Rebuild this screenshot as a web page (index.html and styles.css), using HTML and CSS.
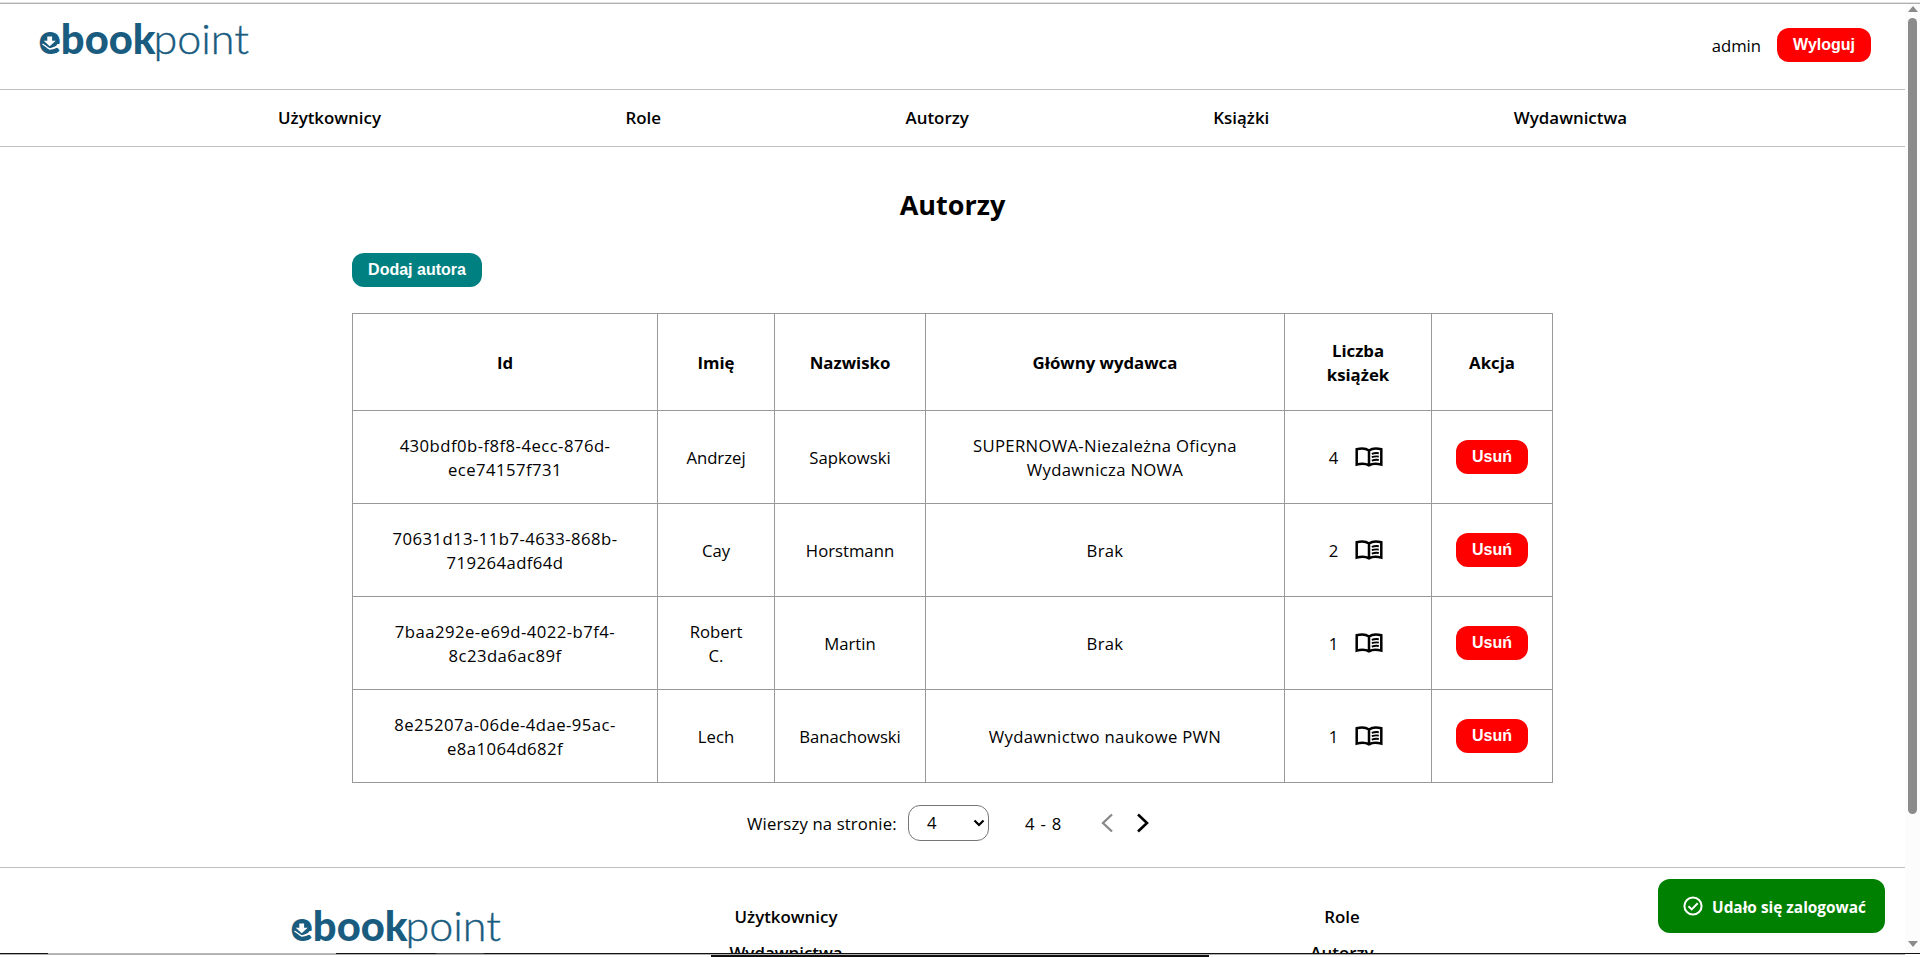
FILE: index.html
```html
<!DOCTYPE html>
<html lang="pl">
<head>
<meta charset="utf-8">
<title>Autorzy</title>
<link rel="stylesheet" href="styles.css">
</head>
<body>
<svg class="defs" width="0" height="0" aria-hidden="true">
  <defs>
    <symbol id="logo" viewBox="0 0 214 44">
      <g class="logo-text">
        <text x="0.500" y="32.500" class="logo-bold" textLength="117" lengthAdjust="spacingAndGlyphs">ebook</text>
        <text x="115.500" y="32.500" class="logo-light" textLength="95.500" lengthAdjust="spacingAndGlyphs">point</text>
        <ellipse cx="12" cy="20.500" rx="8" ry="7"/>
      </g>
      <path class="logo-cut" d="M9.300 15.500h4.800v4.200h3.600L11.700 25.200 5.700 19.700h3.600z"/>
      <path class="logo-swoosh" d="M4.500 23l7.200 5 9.500-3.500"/>
    </symbol>
    <symbol id="book" viewBox="0 0 28 20">
      <path d="M14 3.500C10.500 1 6 1 1.700 2.300V17.600C6 16.300 10.500 16.300 14 18.300C17.500 16.300 22 16.300 26.300 17.600V2.300C22 1 17.500 1 14 3.500V18" fill="none" stroke="#000" stroke-width="2.500"/>
      <path d="M16.800 6.800q3.500-1.200 7-.6M16.800 10.200q3.500-1.200 7-.6M16.800 13.600q3.500-1.200 7-.6" fill="none" stroke="#000" stroke-width="1.900"/>
    </symbol>
  </defs>
</svg>
<div class="edge-top"></div>
<div class="viewport">
  <div class="page">
    <header class="header">
      <svg class="logo"><use href="#logo"/></svg>
      <div class="account"><span>admin</span><button class="btn danger">Wyloguj</button></div>
    </header>
    <nav class="nav">
      <a>Użytkownicy</a><a>Role</a><a>Autorzy</a><a>Książki</a><a>Wydawnictwa</a>
    </nav>
    <main class="main">
      <h1>Autorzy</h1>
      <button class="btn add">Dodaj autora</button>
      <table class="authors">
        <colgroup><col class="c-id"><col class="c-first"><col class="c-last"><col class="c-pub"><col class="c-count"><col class="c-action"></colgroup>
        <thead><tr><th>Id</th><th>Imię</th><th>Nazwisko</th><th>Główny wydawca</th><th>Liczba<br>książek</th><th>Akcja</th></tr></thead>
        <tbody>
          <tr><td class="id">430bdf0b-f8f8-4ecc-876d-<br>ece74157f731</td><td>Andrzej</td><td>Sapkowski</td><td class="pub">SUPERNOWA-Niezależna Oficyna<br>Wydawnicza NOWA</td><td><div class="count"><span>4</span><svg class="book"><use href="#book"/></svg></div></td><td class="action"><button class="btn danger">Usuń</button></td></tr>
          <tr><td class="id">70631d13-11b7-4633-868b-<br>719264adf64d</td><td>Cay</td><td>Horstmann</td><td class="pub">Brak</td><td><div class="count"><span>2</span><svg class="book"><use href="#book"/></svg></div></td><td class="action"><button class="btn danger">Usuń</button></td></tr>
          <tr><td class="id">7baa292e-e69d-4022-b7f4-<br>8c23da6ac89f</td><td>Robert<br>C.</td><td>Martin</td><td class="pub">Brak</td><td><div class="count"><span>1</span><svg class="book"><use href="#book"/></svg></div></td><td class="action"><button class="btn danger">Usuń</button></td></tr>
          <tr><td class="id">8e25207a-06de-4dae-95ac-<br>e8a1064d682f</td><td>Lech</td><td>Banachowski</td><td class="pub">Wydawnictwo naukowe PWN</td><td><div class="count"><span>1</span><svg class="book"><use href="#book"/></svg></div></td><td class="action"><button class="btn danger">Usuń</button></td></tr>
        </tbody>
      </table>
      <div class="pager">
        <span class="pager-label">Wierszy na stronie:</span>
        <div class="select"><span>4</span><svg width="12" height="8" viewBox="0 0 12 8"><path d="M1.500 1.500L6 6l4.500-4.500" fill="none" stroke="#000" stroke-width="2.200"/></svg></div>
        <span class="range">4 - 8</span>
        <svg class="arrow prev" viewBox="0 0 12 20"><path d="M11 1.500L2 10l9 8.500" fill="none" stroke="#888" stroke-width="2.300"/></svg>
        <svg class="arrow" viewBox="0 0 12 20"><path d="M1 1.500L10 10l-9 8.500" fill="none" stroke="#000" stroke-width="2.600"/></svg>
      </div>
    </main>
    <footer class="footer">
      <svg class="logo"><use href="#logo"/></svg>
      <div class="links first"><a>Użytkownicy</a><a>Wydawnictwa</a></div>
      <div class="links"><a>Role</a><a>Autorzy</a></div>
    </footer>
  </div>
  <div class="scrollbar">
    <svg width="10" height="6" viewBox="0 0 10 6"><path d="M5 0l5 6H0z" fill="#8b8b8b"/></svg>
    <div class="thumb"></div>
    <svg class="down" width="10" height="6" viewBox="0 0 10 6"><path d="M0 0h10L5 6z" fill="#8b8b8b"/></svg>
  </div>
</div>
<div class="edge-bottom"></div>
<div class="toast">
  <svg width="20" height="20" viewBox="0 0 20 20"><circle cx="10" cy="10" r="8.600" fill="none" stroke="#fff" stroke-width="2"/><path d="M5.500 10.200l3.200 3.200 6-6.200" fill="none" stroke="#fff" stroke-width="2"/></svg>
  <span>Udało się zalogować</span>
</div>
</body>
</html>
```
FILE: styles.css
```css
* { box-sizing: border-box; }
body { margin: 0; height: 957px; overflow: hidden; background: #fff; color: #000; font: 16.7px/24px "Open Sans", "Noto Sans", sans-serif; display: flex; flex-direction: column; }
.defs { position: absolute; }
.edge-top { height: 4px; flex: none; border-top: 2px solid #fff; background: linear-gradient(#e2e2e2 50%, #b0b0b0 50%); }
.viewport { height: 949px; display: flex; overflow: hidden; flex: none; }
.page { width: 1905px; flex: none; height: 949px; overflow: hidden; }
.header { height: 86px; border-bottom: 1px solid #bfbfbf; display: flex; justify-content: space-between; align-items: flex-start; padding: 15px 34px 0 38px; }
.logo { width: 214px; height: 44px; flex: none; }
.header .logo { margin-top: 2px; }
.logo-text { font-family: Lato, sans-serif; font-size: 42px; fill: #195c80; }
.logo-bold { font-weight: 900; }
.logo-light { font-weight: 300; stroke: #195c80; stroke-width: 0.4; }
.logo-cut { fill: #fff; }
.logo-swoosh { fill: none; stroke: #fff; stroke-width: 1.3; }
.account { display: flex; gap: 16px; align-items: center; padding-top: 9px; }
.account span { padding-top: 2px; }
.btn { font: bold 16px/18px "Liberation Sans", Arial, sans-serif; color: #fff; border: 0; border-radius: 12px; height: 34px; padding: 8px 16px; display: block; margin: 0; white-space: nowrap; }
.danger { background: #f00; }
.add { background: teal; width: 130px; }
.nav { height: 57px; border-bottom: 1px solid #bfbfbf; display: flex; justify-content: space-between; align-items: center; padding: 0 278px; }
.nav a, .links a { font-weight: 600; font-size: 16.9px; }
.main { width: 1201px; margin: 0 auto; }
h1 { margin: 38px 0 0; font-size: 27px; line-height: 40px; font-weight: 700; text-align: center; }
.add { margin-top: 28px; }
.authors { margin-top: 26px; border-collapse: collapse; table-layout: fixed; width: 1201px; text-align: center; }
.authors th, .authors td { border: 1px solid #999; padding: 1px 0 0; vertical-align: middle; }
.authors th { font-weight: 700; font-size: 16.8px; }
.authors thead tr { height: 97px; }
.authors tbody tr { height: 93px; }
.authors .id { letter-spacing: 0.45px; }
.authors .pub { letter-spacing: 0.32px; }
.authors .action { padding-top: 0; }
.c-id { width: 305px; } .c-first { width: 117px; } .c-last { width: 151px; } .c-pub { width: 359px; } .c-count { width: 147px; } .c-action { width: 121px; }
.authors .btn { margin: 0 auto; }
.count { display: flex; justify-content: center; align-items: center; gap: 17px; padding-right: 4px; }
.book { width: 28px; height: 20px; margin-top: -2px; }
.pager { display: flex; align-items: center; height: 36px; margin-top: 22px; padding-left: 395px; }
.pager-label { width: 161px; padding-top: 2px; white-space: nowrap; letter-spacing: 0.14px; }
.select { width: 81px; height: 36px; border: 1px solid #767676; border-radius: 12px; display: flex; align-items: center; justify-content: space-between; padding: 0 3px 0 18px; }
.range { width: 77px; padding: 2px 0 0 36px; white-space: nowrap; word-spacing: 1.6px; }
.arrow { width: 12px; height: 20px; }
.prev { margin: 0 24px 0 35px; }
.footer { border-top: 1px solid #bfbfbf; margin-top: 26px; height: 200px; display: flex; align-items: flex-start; padding: 34px 0 0 290px; }
.footer .logo { margin-top: 6px; }
.links { display: flex; flex-direction: column; align-items: center; gap: 12px; width: 300px; margin: 3px 0 0 256px; }
.links.first { margin-left: 132px; }
.scrollbar { width: 15px; background: #fcfcfc; display: flex; flex-direction: column; align-items: center; padding-top: 2px; }
.thumb { width: 9px; height: 796px; margin-top: 6px; border-radius: 5px; background: #8b8b8b; }
.down { margin-top: 127px; }
.edge-bottom { height: 4px; flex: none; background: linear-gradient(90deg, #111 48px, #b8b8b8 48px 336px, #111 336px 436px, #444 436px 484px, #111 484px) 0 0 / 100% 1px no-repeat, linear-gradient(#b0b0b0, #b0b0b0) 0 1px / 1905px 1px no-repeat, linear-gradient(90deg, #fff 711px, #111 711px 1209px, #fff 1209px) 0 2px / 100% 2px no-repeat; }
.toast { position: absolute; left: 1658px; top: 879px; width: 227px; height: 54px; border-radius: 12px; background: green; color: #fff; display: flex; align-items: center; gap: 9px; padding-left: 25px; font-weight: 700; font-size: 15.4px; white-space: nowrap; }
.toast span { padding-top: 3px; }
```
